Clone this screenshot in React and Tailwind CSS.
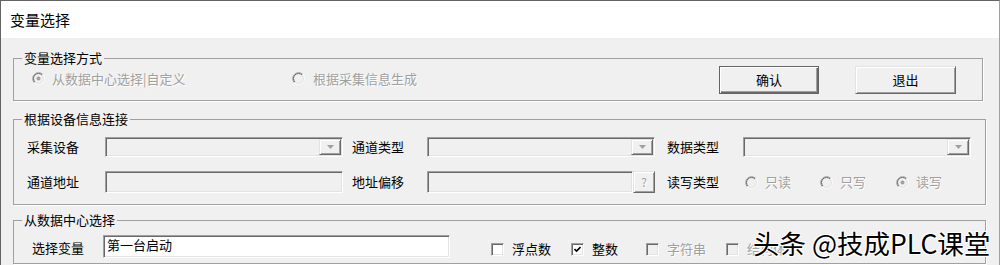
import React from "react";

const FONT = "font-['Noto_Sans_CJK_SC','Noto_Sans',sans-serif]";
const DIS = "text-[#a0a0a0] [text-shadow:1px_1px_0_#fff]";
const SUNKEN =
  "border border-t-[#a0a0a0] border-l-[#a0a0a0] border-b-white border-r-white shadow-[inset_1px_1px_0_#696969,inset_-1px_-1px_0_#e3e3e3]";
const RAISED =
  "border border-t-[#e3e3e3] border-l-[#e3e3e3] border-b-[#696969] border-r-[#696969] shadow-[inset_1px_1px_0_#fff,inset_-1px_-1px_0_#a0a0a0]";

function Radio({ checked }) {
  return (
    <svg width="13" height="13" viewBox="0 0 13 13" className="shrink-0">
      <circle cx="6.5" cy="6.5" r="5" fill="#f0f0f0" />
      <path d="M2.26 10.74 A6 6 0 0 1 10.74 2.26" stroke="#a0a0a0" fill="none" />
      <path d="M10.74 2.26 A6 6 0 0 1 2.26 10.74" stroke="#ffffff" fill="none" />
      <path d="M2.96 10.04 A5 5 0 0 1 10.04 2.96" stroke="#696969" fill="none" />
      <path d="M10.04 2.96 A5 5 0 0 1 2.96 10.04" stroke="#e3e3e3" fill="none" />
      {checked && <circle cx="6.5" cy="6.5" r="2" fill="#a0a0a0" />}
    </svg>
  );
}

function Check({ checked, disabled }) {
  return (
    <div
      className={`w-[13px] h-[13px] shrink-0 ${SUNKEN} ${disabled ? "bg-[#f0f0f0]" : "bg-white"} flex items-center justify-center`}
    >
      {checked && (
        <svg width="7" height="7" viewBox="0 0 7 7">
          <path d="M0.5 3 L2.5 5 L6.5 1" stroke="#000" strokeWidth="1.6" fill="none" />
        </svg>
      )}
    </div>
  );
}

function Combo({ w }) {
  return (
    <div className={`${w} h-[20px] ${SUNKEN} bg-[#f0f0f0] flex justify-end p-[1px]`}>
      <div className={`w-[22px] h-full ${RAISED} bg-[#f0f0f0] flex items-center justify-center`}>
        <svg width="7" height="4" viewBox="0 0 7 4">
          <path d="M0 0 L7 0 L3.5 4 Z" fill="#a0a0a0" />
        </svg>
      </div>
    </div>
  );
}

function Legend({ children }) {
  return <legend className="ml-[8px] px-[2px] leading-[14px]">{children}</legend>;
}

export default function App() {
  return (
    <div
      className={`relative w-[1000px] h-[265px] overflow-hidden bg-[#f0f0f0] border-l border-t border-r border-l-[#646464] border-t-[#646464] border-r-[#a0a0a0] text-[13px] leading-[14px] text-black ${FONT}`}
    >
      <div className="h-[37px] bg-white pl-[9px] flex items-center text-[15px]">变量选择</div>

      <fieldset className="ml-[12px] mt-[13px] w-[970px] h-[50px] border border-[#a0a0a0] shadow-[1px_1px_0_#fff]">
        <Legend>变量选择方式</Legend>
        <div className="flex items-start mt-[1px]">
          <div className={`ml-[18px] mt-[6px] w-[260px] h-[13px] flex items-center gap-[7px] ${DIS}`}>
            <Radio checked />
            <span>从数据中心选择|自定义</span>
          </div>
          <div className={`mt-[6px] w-[427px] h-[13px] flex items-center gap-[8px] ${DIS}`}>
            <Radio />
            <span>根据采集信息生成</span>
          </div>
          <div className="w-[100px] h-[28px] border border-[#646464] shadow-[inset_1px_1px_0_#fff,inset_-1px_-1px_0_#696969,inset_-2px_-2px_0_#a0a0a0] flex items-center justify-center">
            确认
          </div>
          <div className={`ml-[36px] w-[101px] h-[28px] ${RAISED} flex items-center justify-center`}>
            退出
          </div>
        </div>
      </fieldset>

      <fieldset className="ml-[12px] mt-[11px] w-[973px] h-[93px] border border-[#a0a0a0] shadow-[1px_1px_0_#fff]">
        <Legend>根据设备信息连接</Legend>
        <div className="flex items-center mt-[11px] h-[20px]">
          <span className="ml-[13px] w-[78px]">采集设备</span>
          <Combo w="w-[238px]" />
          <span className="ml-[9px] w-[75px]">通道类型</span>
          <Combo w="w-[228px]" />
          <span className="ml-[12px] w-[76px]">数据类型</span>
          <Combo w="w-[228px]" />
        </div>
        <div className="flex items-center mt-[14px] h-[22px]">
          <span className="ml-[13px] w-[78px]">通道地址</span>
          <div className={`w-[238px] h-full ${SUNKEN} bg-[#f0f0f0]`} />
          <span className="ml-[9px] w-[75px]">地址偏移</span>
          <div className={`w-[206px] h-full ${SUNKEN} bg-[#f0f0f0]`} />
          <div className={`w-[22px] h-full ${RAISED} flex items-center justify-center text-[12px] ${DIS}`}>?</div>
          <span className="ml-[12px] w-[78px]">读写类型</span>
          <div className={`w-[75px] flex items-center gap-[7px] ${DIS}`}>
            <Radio />
            <span>只读</span>
          </div>
          <div className={`w-[76px] flex items-center gap-[7px] ${DIS}`}>
            <Radio />
            <span>只写</span>
          </div>
          <div className={`flex items-center gap-[7px] ${DIS}`}>
            <Radio checked />
            <span>读写</span>
          </div>
        </div>
      </fieldset>

      <fieldset className="ml-[12px] mt-[8px] w-[973px] h-[51px] border border-[#a0a0a0] shadow-[1px_1px_0_#fff]">
        <Legend>从数据中心选择</Legend>
        <div className="flex items-center mt-[8px] h-[23px]">
          <span className="ml-[18px] w-[71px] mt-[3px]">选择变量</span>
          <div className={`w-[347px] h-full ${SUNKEN} bg-white pl-[3px] pt-[2px]`}>第一台启动</div>
          <div className="ml-[41px] mt-[5px] w-[80px] flex items-center gap-[8px]">
            <Check />
            <span>浮点数</span>
          </div>
          <div className="mt-[5px] w-[75px] flex items-center gap-[8px]">
            <Check checked />
            <span>整数</span>
          </div>
          <div className={`mt-[5px] w-[80px] flex items-center gap-[8px] ${DIS}`}>
            <Check disabled />
            <span>字符串</span>
          </div>
          <div className={`mt-[5px] flex items-center gap-[8px] ${DIS}`}>
            <Check disabled />
            <span>结构体</span>
          </div>
        </div>
      </fieldset>

      <div className="absolute left-[752px] top-[229px] text-[26.5px] leading-[26px] whitespace-nowrap text-black [text-shadow:-1px_-1px_0_#fff,1px_-1px_0_#fff,-1px_1px_0_#fff,1px_1px_0_#fff,0_0_2px_#fff]">
        头条 @技成PLC课堂
      </div>
    </div>
  );
}
